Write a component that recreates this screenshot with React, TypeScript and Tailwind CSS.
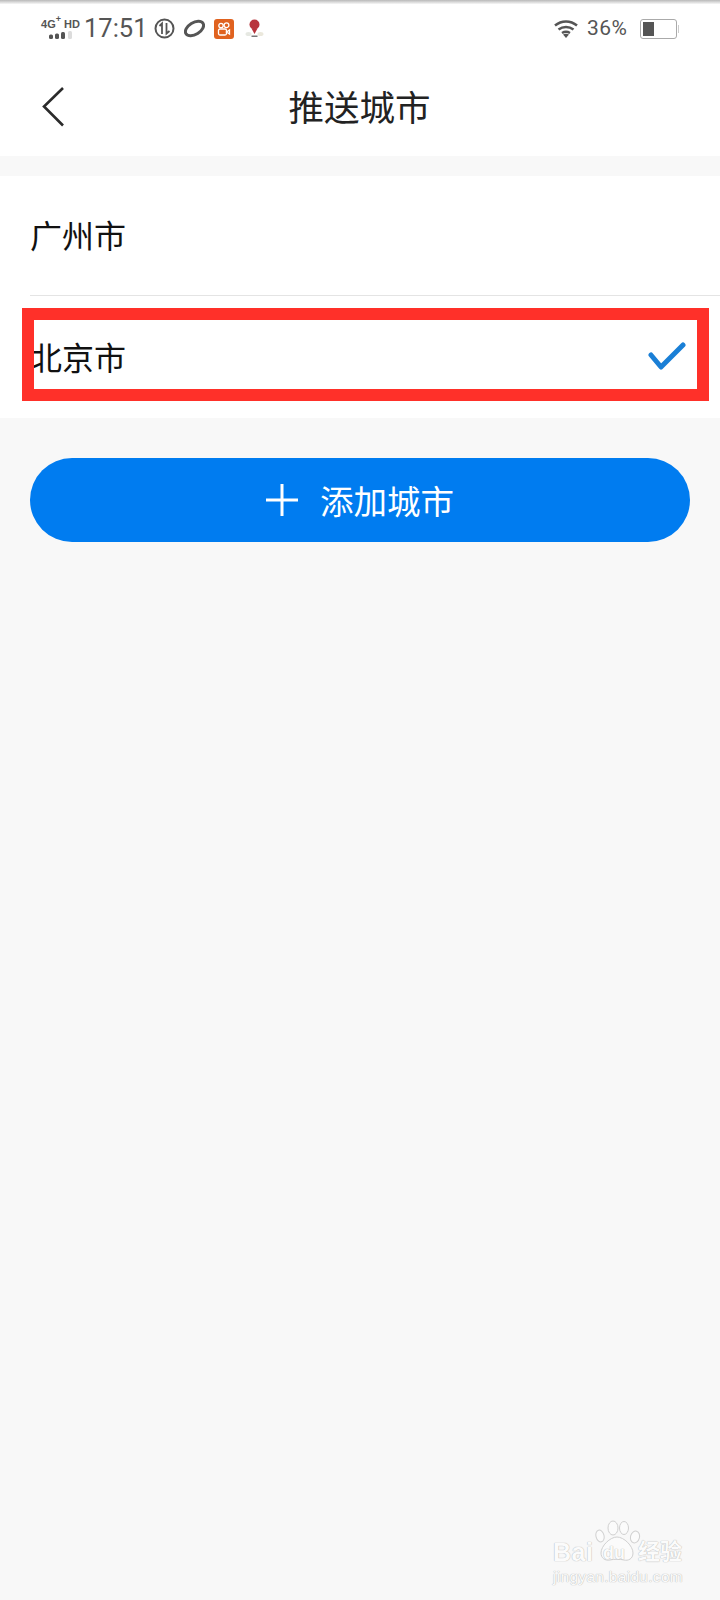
import React from 'react';

const cjk = "font-['Noto_Sans_CJK_SC','Noto_Sans',sans-serif]";

const StatusBar = () => (
  <div className="h-[56px] bg-white bg-linear-to-b from-[#b9b9b9] via-white via-[8%] to-white flex items-center justify-between pl-[42px] pr-[41px]">
    <div className="flex items-center h-full pt-[1px]">
      <div className="w-[37px] flex flex-col items-center gap-[1px]">
        <div className="font-['Liberation_Sans',sans-serif] font-bold text-[11px] leading-[12px] text-[#555] whitespace-nowrap">4G<sup className="text-[9px] align-[2px] leading-none">+</sup> HD</div>
        <svg width="24" height="8" viewBox="0 0 24 8">
          <rect x="0" y="3.500" width="4" height="4.500" rx="1.500" fill="#555" />
          <rect x="6" y="2.500" width="4" height="5.500" rx="1.500" fill="#555" />
          <rect x="12" y="1" width="4" height="7" rx="1.500" fill="#555" />
          <rect x="19" y="0" width="4" height="8" rx="1.500" fill="#dcdcdc" />
        </svg>
      </div>
      <span className="ml-[5px] w-[62px] font-['Roboto',sans-serif] text-[25.500px] leading-none text-[#555]">17:51</span>
      <svg className="ml-[8px]" width="21" height="21" viewBox="0 0 21 21" fill="none" stroke="#555">
        <circle cx="10.500" cy="10.500" r="9" strokeWidth="2" />
        <path d="M8 16V5.500L5.500 8M12.500 5v10.500L15.500 13" strokeWidth="1.800" />
      </svg>
      <svg className="ml-[9px]" width="21" height="21" viewBox="0 0 21 21" fill="none" stroke="#555">
        <ellipse cx="10.500" cy="10.500" rx="10" ry="6" transform="rotate(-32 10.500 10.500)" strokeWidth="3" />
        <path d="M4.500 15L16.500 7" stroke="#fff" strokeWidth="1.500" />
      </svg>
      <div className="ml-[9px] w-[20px] h-[20px] rounded-[3px] bg-[#e0621f] flex items-center justify-center">
        <svg width="14" height="14" viewBox="0 0 14 14" fill="none" stroke="#fff" strokeWidth="1.300">
          <circle cx="4" cy="3.500" r="2.200" />
          <circle cx="9.500" cy="3.200" r="2.400" />
          <rect x="1.500" y="7" width="8" height="6" rx="1.500" />
          <path d="M9.500 10l3-2v4z" />
        </svg>
      </div>
      <svg className="ml-[11px]" width="19" height="19" viewBox="0 0 19 19">
        <ellipse cx="3.500" cy="15" rx="3" ry="2" fill="#e6e8e2" />
        <ellipse cx="15.500" cy="15" rx="3" ry="2" fill="#ebe8dc" />
        <circle cx="9.500" cy="5.500" r="5" fill="#b8343c" />
        <path d="M6.500 9.500L9.500 15l3-5.500z" fill="#b8343c" />
        <rect x="6.500" y="16.500" width="6" height="1.500" fill="#777" />
      </svg>
    </div>
    <div className="flex items-center h-full pt-[1px]">
      <svg width="24" height="19" viewBox="0 0 24 19" fill="none" stroke="#555" strokeWidth="2.500">
        <path d="M1 6.500C7.500 1 16.500 1 23 6.500" />
        <path d="M4.500 10.500C9 7 15 7 19.500 10.500" />
        <path d="M8 14C10.500 12.500 13.500 12.500 16 14" />
        <path d="M12 19l-3-3.500c2-1 4-1 6 0z" fill="#555" stroke="none" />
      </svg>
      <span className="ml-[9px] w-[44px] font-['Roboto',sans-serif] text-[21px] leading-none text-[#555] tracking-[0.5px] whitespace-nowrap">36%</span>
      <div className="ml-[9px] flex items-center">
        <div className="w-[37px] h-[20px] rounded-[3px] border-[1.500px] border-[#aaa] p-[2px] bg-white">
          <div className="w-[11px] h-full bg-[#555]" />
        </div>
        <div className="ml-[1px] w-[1px] h-[8px] bg-[#ccc]" />
      </div>
    </div>
  </div>
);

const Header = () => (
  <div className="relative h-[100px] bg-white flex items-center justify-center">
    <button className="absolute left-[42px] top-[30px]">
      <svg className="block" width="24" height="42" viewBox="0 0 24 42" fill="none" stroke="#2b2b2b" strokeWidth="2.600">
        <path d="M21 2L2 20.500l19 19" />
      </svg>
    </button>
    <h1 className={`${cjk} text-[35.500px] leading-none font-normal text-[#222] -ml-[1px]`}>推送城市</h1>
  </div>
);

const Row = ({ name, checked, last }: { name: string; checked?: boolean; last?: boolean }) => (
  <div className={`ml-[30px] flex items-center justify-between pr-[34px] ${last ? 'h-[122px]' : 'h-[120px] border-b border-[#e4e4e4]'}`}>
    <span className={`${cjk} text-[32px] leading-none text-[#111] -mt-[3px]`}>{name}</span>
    {checked && (
      <svg className="-mt-[2px]" width="38" height="30" viewBox="0 0 38 30" fill="none" stroke="#1a7fd6" strokeWidth="5" strokeLinecap="round" strokeLinejoin="round">
        <path d="M3 14l10 12L35 4" />
      </svg>
    )}
  </div>
);

const Watermark = () => (
  <div className="absolute left-[553px] top-[1520px] w-[130px] h-[64px] text-[#fbfbfb] [text-shadow:0_0_1px_#b4b4b4,0_0_1px_#c8c8c8]">
    <svg className="absolute left-[42px] top-[0px]" width="46" height="42" viewBox="0 0 46 42" fill="#fbfbfb" stroke="#d0d0d0">
      <ellipse cx="5" cy="16" rx="4" ry="6" transform="rotate(-15 5 16)" />
      <ellipse cx="18" cy="8" rx="5" ry="7" />
      <ellipse cx="29" cy="8" rx="4.500" ry="6.500" />
      <ellipse cx="40" cy="17" rx="4.500" ry="6" transform="rotate(15 40 17)" />
      <path d="M22 17c7 0 16 9 16 16 0 6-5 8-9 7-4-1-10-1-14 0-5 1-9-2-9-7 0-7 9-16 16-16z" />
    </svg>
    <span className="absolute left-0 top-[20px] font-['Liberation_Sans',sans-serif] font-bold text-[25px] leading-none tracking-[0.5px]">Bai</span>
    <span className="absolute left-[50px] top-[24px] font-['Liberation_Sans',sans-serif] font-bold text-[18px] leading-none">du</span>
    <span className={`absolute left-[85px] top-[18px] ${cjk} font-bold text-[22px] leading-none whitespace-nowrap`}>经验</span>
    <span className="absolute left-0 top-[49px] font-['Liberation_Sans',sans-serif] text-[15.500px] leading-none tracking-[0.3px] whitespace-nowrap">jingyan.baidu.com</span>
  </div>
);

export default function App() {
  return (
    <div className="relative w-[720px] h-[1600px] overflow-hidden bg-[#f8f8f8]">
      <StatusBar />
      <Header />
      <div className="mt-[20px] bg-white">
        <Row name="广州市" />
        <Row name="北京市" checked last />
      </div>
      <div className="px-[30px] mt-[40px]">
        <button className="w-full h-[84px] rounded-[42px] bg-[#007cf0] flex items-center justify-center gap-[22px] text-white">
          <svg width="32" height="32" viewBox="0 0 32 32" stroke="#fff" strokeWidth="3">
            <path d="M0 16h32M16 0v32" />
          </svg>
          <span className={`${cjk} text-[33.500px] leading-none`}>添加城市</span>
        </button>
      </div>
      {/* red annotation drawn over the screenshot */}
      <div className="absolute left-[22px] top-[308px] w-[687px] h-[93px] border-[12px] border-[#ff3029]" />
      <Watermark />
    </div>
  );
}
